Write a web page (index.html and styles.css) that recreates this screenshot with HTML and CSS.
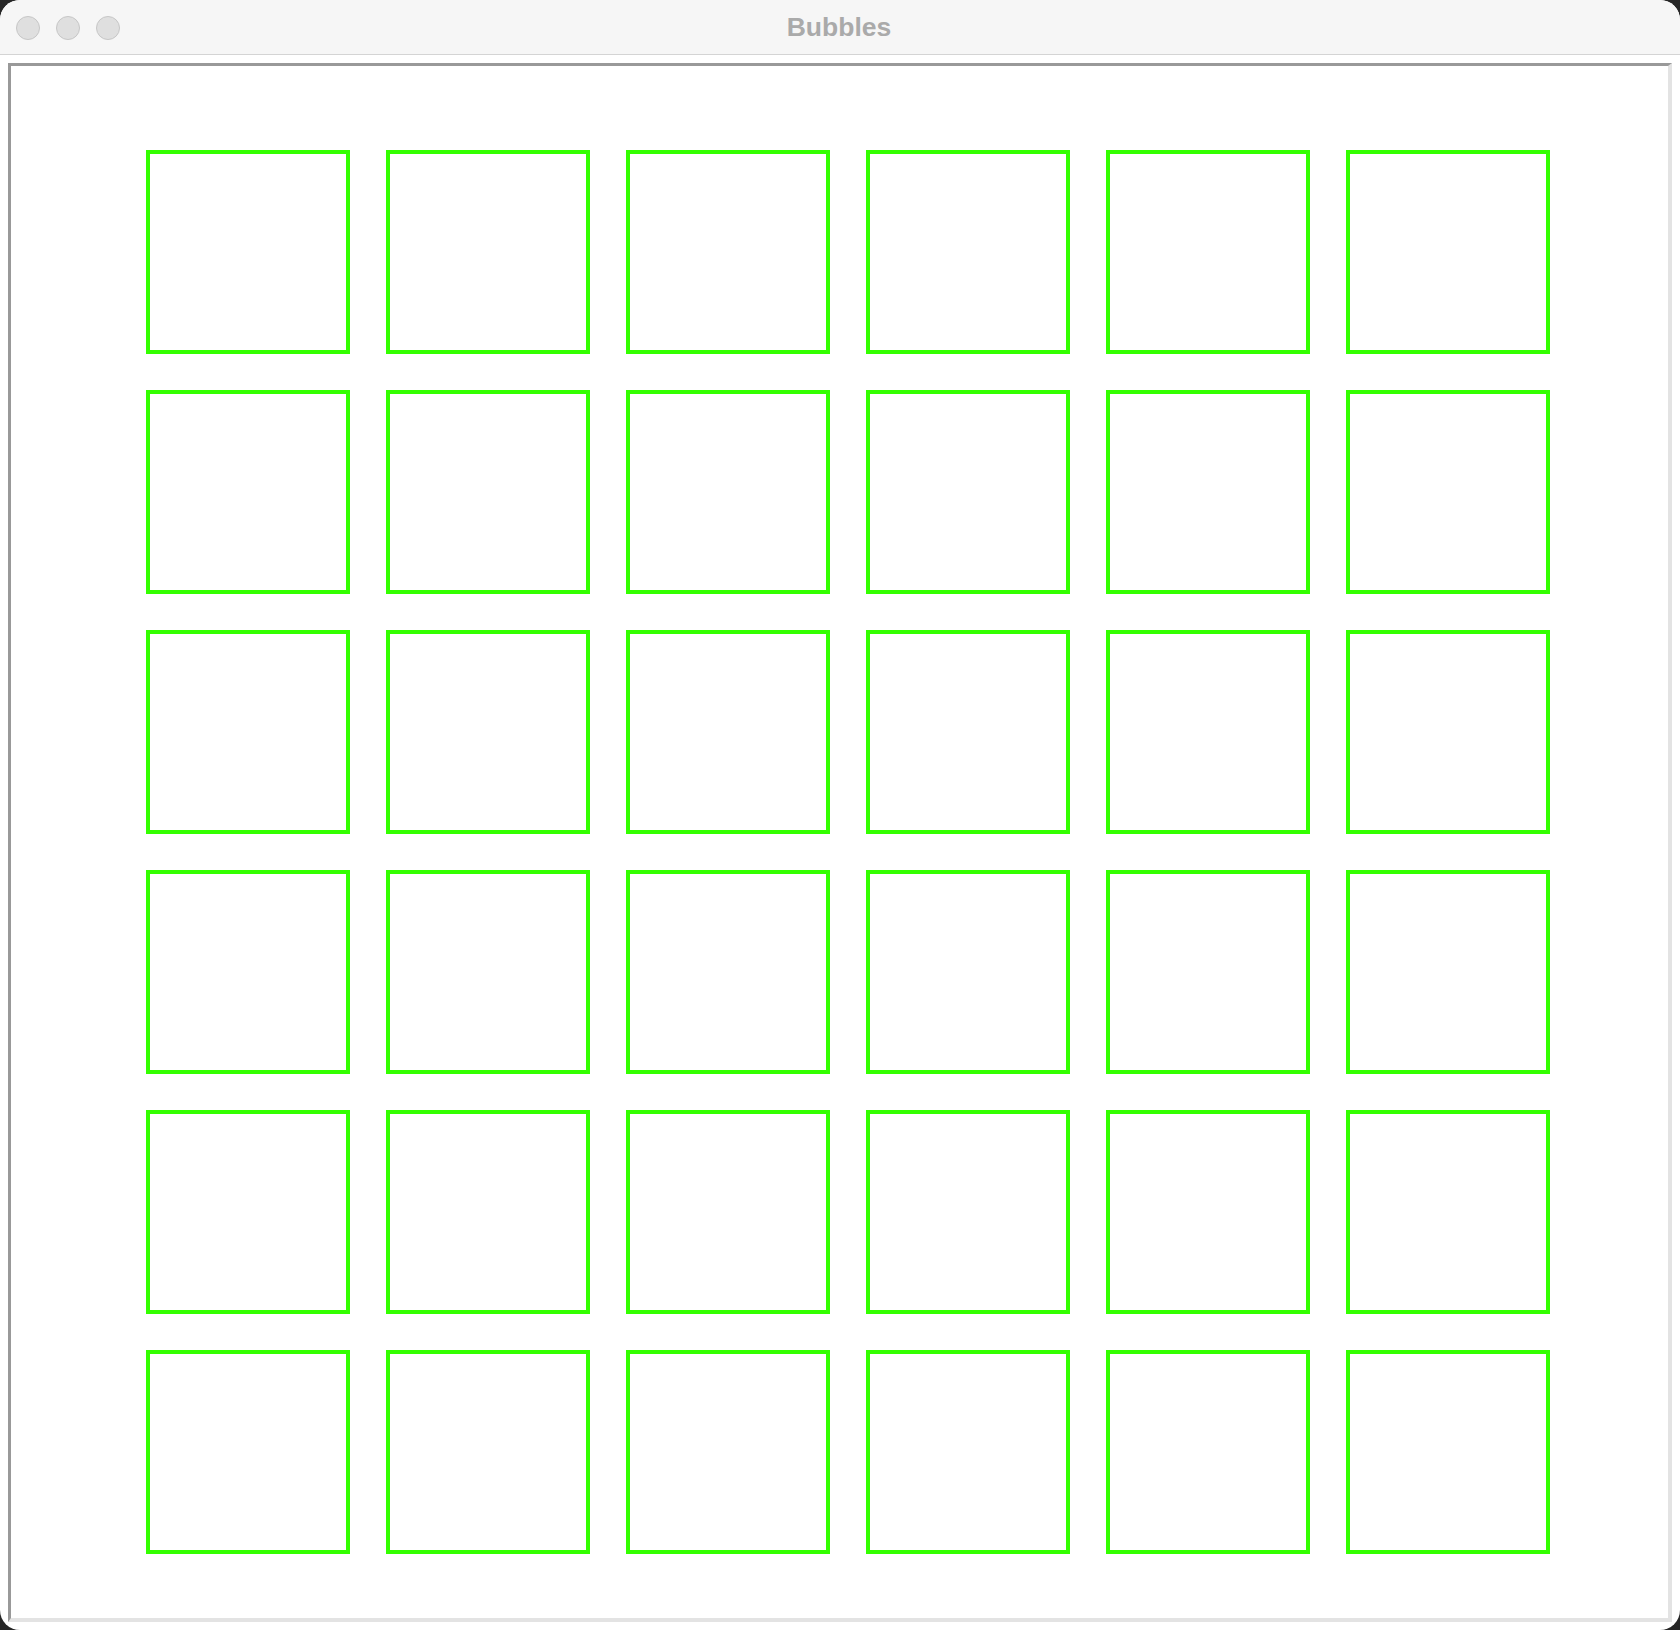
FILE: index.html
```html
<!DOCTYPE html>
<html lang="en">
<head>
  <meta charset="UTF-8">
  <title>Bubbles</title>
  <link rel="stylesheet" href="styles.css">
</head>
<body>
  <div class="window">
    <div class="titlebar">
      <div class="lights">
        <span class="light"></span>
        <span class="light"></span>
        <span class="light"></span>
      </div>
      <div class="title">Bubbles</div>
    </div>

    <div class="canvas">
      <div class="grid">
        <div class="cell"></div><div class="cell"></div><div class="cell"></div>
        <div class="cell"></div><div class="cell"></div><div class="cell"></div>

        <div class="cell"></div><div class="cell"></div><div class="cell"></div>
        <div class="cell"></div><div class="cell"></div><div class="cell"></div>

        <div class="cell"></div><div class="cell"></div><div class="cell"></div>
        <div class="cell"></div><div class="cell"></div><div class="cell"></div>

        <div class="cell"></div><div class="cell"></div><div class="cell"></div>
        <div class="cell"></div><div class="cell"></div><div class="cell"></div>

        <div class="cell"></div><div class="cell"></div><div class="cell"></div>
        <div class="cell"></div><div class="cell"></div><div class="cell"></div>

        <div class="cell"></div><div class="cell"></div><div class="cell"></div>
        <div class="cell"></div><div class="cell"></div><div class="cell"></div>
      </div>
    </div>
  </div>
</body>
</html>
```

FILE: styles.css
```css
html, body {
  margin: 0;
  padding: 0;
}
body {
  background-color: #262626;
  font-family: "Liberation Sans", Arial, sans-serif;
  width: 1680px;
  height: 1630px;
  overflow: hidden;
}
.window {
  width: 1680px;
  height: 1630px;
  background: #fff;
  border-radius: 20px;
  overflow: hidden;
  display: flex;
  flex-direction: column;
}
.titlebar {
  height: 54px;
  background: #f6f6f6;
  border-bottom: 1px solid #d4d4d4;
  display: flex;
  align-items: center;
  position: relative;
}
.lights {
  display: flex;
  gap: 16px;
  padding-left: 16px;
  padding-top: 1px;
}
.light {
  width: 22px;
  height: 22px;
  border-radius: 50%;
  background: #dfdfdf;
  border: 1px solid #c6c6c6;
}
.title {
  position: absolute;
  left: 0;
  right: 0;
  top: 0;
  bottom: 0;
  display: flex;
  align-items: center;
  justify-content: center;
  padding-right: 2px;
  font-size: 26.5px;
  font-weight: bold;
  color: #aaa;
}
.canvas {
  margin: 8px;
  width: 1664px;
  height: 1559px;
  box-sizing: border-box;
  border-style: solid;
  border-width: 3px 4px 4px 3px;
  border-color: #999 #e3e3e3 #e3e3e3 #999;
  padding: 84px 0 0 135px;
}
.grid {
  display: grid;
  grid-template-columns: repeat(6, 204px);
  grid-auto-rows: 204px;
  gap: 36px;
}
.cell {
  box-sizing: border-box;
  border: 4px solid #33ff00;
}
```
